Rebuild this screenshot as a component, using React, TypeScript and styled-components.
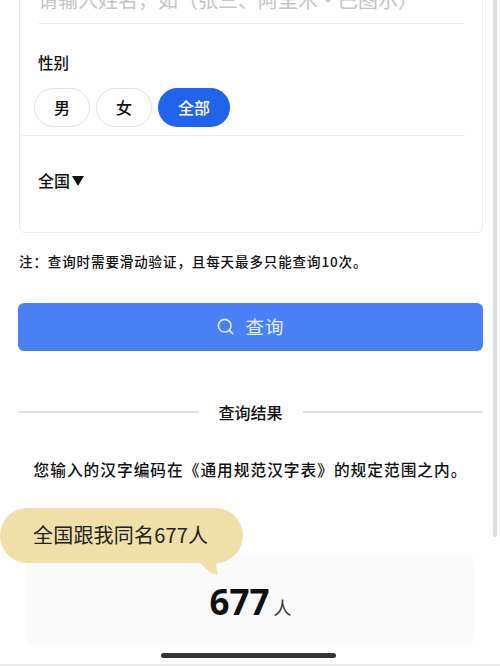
import styled, { createGlobalStyle } from "styled-components";
import { LuSearch } from "react-icons/lu";

const GlobalStyle = createGlobalStyle`
    html, body{
        margin: 0;
        padding: 0;
        background: #fefefe;
    }
    *{
        box-sizing: border-box;
    }
`;

const Page = styled.div`
    position: relative;
    width: 500px;
    height: 666px;
    overflow: hidden;
    background: #fefefe;
    color: #111;
    font-family: "Noto Sans CJK SC", "Noto Sans", sans-serif;
    border-bottom: 2px solid #ececee;
`;

const ScrollBar = styled.div`
    position: absolute;
    top: 0;
    right: 3px;
    width: 4px;
    height: 537px;
    background: #dfdfe3;
    border-radius: 0 0 2px 2px;
`;

const Content = styled.div`
    margin-top: -30px;
    padding: 0 17px 0 18px;
`;

const Card = styled.section`
    height: 263px;
    margin-left: 1px;
    border: 1px solid #e9e9eb;
    border-radius: 6px;
`;

const NameRow = styled.div`
    height: 53px;
    margin: 0 18px;
    padding-top: 11px;
    border-bottom: 1px solid #f0f0f0;
    color: #c4c4c6;
    font-size: 20px;
    line-height: 36px;
    white-space: nowrap;
`;

const Label = styled.div`
    margin: 26px 0 0 18px;
    font-size: 15.5px;
    line-height: 24px;
    font-weight: 500;
`;

const GenderRow = styled.div`
    display: flex;
    gap: 6px;
    margin: 14px 0 0 14px;
`;

const Pill = styled.button<{ $active?: boolean; $wide?: boolean }>`
    width: ${props => (props.$wide ? "72px" : "56px")};
    height: 39px;
    padding: 0 0 2px;
    border-radius: 20px;
    border: ${props => (props.$active ? "none" : "1.5px solid #e3e3e3")};
    background: ${props => (props.$active ? "#2163ec" : "#fefefe")};
    color: ${props => (props.$active ? "#fff" : "#111")};
    font-family: inherit;
    font-size: 16px;
    font-weight: 500;
`;

const RegionRow = styled.div`
    margin: 8px 17px 0 0;
    padding: 32px 0 0 18px;
    border-top: 1px solid #f0f0f0;
    display: flex;
    align-items: center;
    font-size: 16px;
    line-height: 24px;
    font-weight: 500;
`;

const Arrow = styled.span`
    width: 0;
    height: 0;
    margin: 2px 0 0 2px;
    border-left: 6.5px solid transparent;
    border-right: 6.5px solid transparent;
    border-top: 10px solid #111;
`;

const Note = styled.p`
    margin: 18px 0 0 1px;
    font-size: 13.5px;
    line-height: 20px;
    font-weight: 500;
    letter-spacing: 0.9px;
    white-space: nowrap;
`;

const SearchButton = styled.button`
    display: flex;
    align-items: center;
    justify-content: center;
    gap: 10px;
    width: 465px;
    height: 48px;
    margin-top: 32px;
    padding: 0 0 2px;
    border: none;
    border-radius: 6px;
    background: #4a80f6;
    color: #e8effd;
    font-family: inherit;
    font-size: 18.5px;
    letter-spacing: 1px;
    .icon{
        font-size: 19px;
    }
`;

const ResultTitle = styled.div`
    display: flex;
    align-items: center;
    gap: 20px;
    margin-top: 49px;
    font-size: 16px;
    line-height: 24px;
    font-weight: 500;
    &::before, &::after{
        content: "";
        flex: 1;
        height: 2px;
        background: #e2e2e2;
    }
`;

const Message = styled.p`
    margin: 33px 0 0;
    text-align: center;
    font-size: 15.7px;
    line-height: 26px;
    font-weight: 500;
    letter-spacing: 1px;
    white-space: nowrap;
`;

const CountBox = styled.div`
    display: flex;
    align-items: baseline;
    justify-content: center;
    gap: 4px;
    width: 449px;
    height: 90px;
    margin: 72px 0 0 8px;
    padding-top: 19px;
    border-radius: 8px;
    background: #fafafb;
    strong{
        font-family: "Noto Sans", sans-serif;
        font-size: 35px;
        line-height: 56px;
        font-weight: 700;
    }
    span{
        font-size: 18px;
        color: #333;
    }
`;

const Bubble = styled.div`
    position: absolute;
    left: 0;
    top: 508px;
    width: 243px;
    height: 55px;
    padding-left: 33px;
    border-radius: 28px;
    background: #f0dfa8;
    color: #222;
    font-size: 20px;
    line-height: 53px;
    letter-spacing: 0.2px;
    white-space: nowrap;
    &::after{
        content: "";
        position: absolute;
        left: 198px;
        top: 53px;
        width: 20px;
        height: 14px;
        background: #f0dfa8;
        clip-path: polygon(0 0, 100% 0, 90% 30%, 100% 100%, 60% 80%);
    }
`;

const HomeBar = styled.div`
    position: absolute;
    left: 161px;
    top: 653px;
    width: 175px;
    height: 5px;
    border-radius: 3px;
    background: #333;
`;

function App(){
    return (
        <Page>
            <GlobalStyle />
            <Content>
                <Card>
                    <NameRow>请输入姓名，如（张三、阿里木·巴图尔）</NameRow>
                    <Label>性别</Label>
                    <GenderRow>
                        <Pill>男</Pill>
                        <Pill>女</Pill>
                        <Pill $active $wide>全部</Pill>
                    </GenderRow>
                    <RegionRow>全国<Arrow /></RegionRow>
                </Card>
                <Note>注：查询时需要滑动验证，且每天最多只能查询10次。</Note>
                <SearchButton><LuSearch className="icon" />查询</SearchButton>
                <ResultTitle>查询结果</ResultTitle>
                <Message>您输入的汉字编码在《通用规范汉字表》的规定范围之内。</Message>
                <CountBox><strong>677</strong><span>人</span></CountBox>
            </Content>
            <ScrollBar />
            <Bubble>全国跟我同名677人</Bubble>
            <HomeBar />
        </Page>
    );
}

export default App;
